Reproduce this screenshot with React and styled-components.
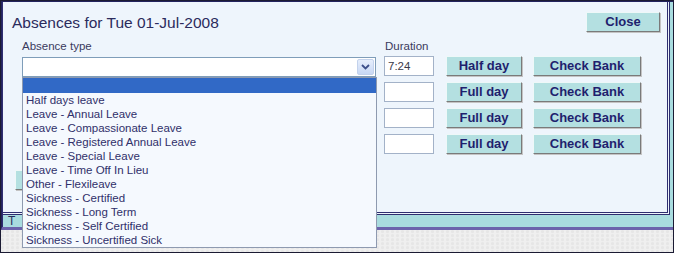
import React from 'react';
import styled, { createGlobalStyle } from 'styled-components';

const GlobalStyle = createGlobalStyle`
  body {
    margin: 0;
    background: #ffffff;
    font-family: "Liberation Sans", Arial, sans-serif;
  }
`;

const absenceTypes = [
  'Half days leave',
  'Leave - Annual Leave',
  'Leave - Compassionate Leave',
  'Leave - Registered Annual Leave',
  'Leave - Special Leave',
  'Leave - Time Off In Lieu',
  'Other - Flexileave',
  'Sickness - Certified',
  'Sickness - Long Term',
  'Sickness - Self Certified',
  'Sickness - Uncertified Sick',
];

const rows = [
  { duration: '7:24', kind: 'Half day' },
  { duration: '', kind: 'Full day' },
  { duration: '', kind: 'Full day' },
  { duration: '', kind: 'Full day' },
];

const App = () => {
  return (
    <>
      <GlobalStyle />
      <Page>
        <Window>
          <Panel>
            <Header>
              <Title>Absences for Tue 01-Jul-2008</Title>
              <Button $width={74}>Close</Button>
            </Header>
            <Form>
              <Label>Absence type</Label>
              <Label $indent={1}>Duration</Label>
              <span />
              <span />
              {rows.map((row, i) => (
                <React.Fragment key={i}>
                  {i === 0 ? (
                    <Combo>
                      <ComboArrow>
                        <svg width="9" height="6" viewBox="0 0 9 6">
                          <path d="M1 1 L4.5 4.5 L8 1" fill="none" stroke="#3d4f8a" strokeWidth="1.8" />
                        </svg>
                      </ComboArrow>
                    </Combo>
                  ) : (
                    <span />
                  )}
                  <DurationBox>{row.duration}</DurationBox>
                  <Button $width={76}>{row.kind}</Button>
                  <Button $width={108}>Check Bank</Button>
                </React.Fragment>
              ))}
            </Form>
            <Footer>
              {/* its caption is hidden behind the open list */}
              <Button $width={70} />
            </Footer>
          </Panel>
          <Strip>T</Strip>
        </Window>
        <Backdrop />
        <DropList>
          <Selected />
          {absenceTypes.map((t) => (
            <Item key={t}>{t}</Item>
          ))}
        </DropList>
      </Page>
    </>
  );
};

export default App;

const Page = styled.div`
  position: relative;
  box-sizing: border-box;
  width: 674px;
  height: 253px;
  overflow: hidden;
  border: 1px solid #1b1b33;
  display: flex;
  flex-direction: column;
  background: #eeeeee;
`;

const Window = styled.div`
  display: flex;
  flex-direction: column;
  border-top: 1px solid #23235e;
  border-left: 1px solid #23235e;
  border-bottom: 3px solid #6c64ac;
  padding-right: 3px;
  background: #a9dcdf;
`;

const Panel = styled.div`
  box-sizing: border-box;
  height: 213px;
  border-left: 1px solid #2e2e70;
  border-right: 3px double #2e2e70;
  border-bottom: 3px double #2e2e70;
  background: #eef5fc;
  padding: 10px 7px 0 9px;
  display: flex;
  flex-direction: column;
`;

const Header = styled.div`
  display: flex;
  justify-content: space-between;
  align-items: center;
  height: 20px;
`;

const Title = styled.div`
  font-size: 15.5px;
  line-height: 20px;
  color: #2b2b5c;
  margin-top: 1px;
`;

const Form = styled.div`
  display: grid;
  grid-template-columns: 362px 62px 87px 108px;
  grid-template-rows: 11px repeat(4, 20px);
  row-gap: 6px;
  margin: 7px 0 0 10px;
`;

const Label = styled.div`
  font-size: 11.5px;
  line-height: 14px;
  color: #3a3a5c;
  margin-left: ${(p) => (p.$indent ? `${p.$indent}px` : '0')};
`;

const Combo = styled.div`
  box-sizing: border-box;
  width: 354px;
  height: 20px;
  margin-top: 1px;
  border: 1px solid #7f9db9;
  background: #ffffff;
  display: flex;
  justify-content: flex-end;
  align-items: center;
  padding-right: 1px;
`;

const ComboArrow = styled.div`
  box-sizing: border-box;
  width: 17px;
  height: 16px;
  border: 1px solid #c3d2ec;
  border-radius: 2px;
  background: linear-gradient(#e6eefc, #c8d8f4);
  display: flex;
  align-items: center;
  justify-content: center;
`;

const DurationBox = styled.div`
  box-sizing: border-box;
  width: 50px;
  height: 20px;
  border: 1px solid #a3b2c8;
  background: #ffffff;
  font-size: 11.5px;
  line-height: 18px;
  padding-left: 3px;
  color: #3a3a4a;
`;

const Button = styled.div`
  box-sizing: border-box;
  width: ${(p) => p.$width}px;
  height: 20px;
  background: #b4e0e1;
  border: 1px solid;
  border-color: #eef8f8 #7a7a7a #7a7a7a #eef8f8;
  box-shadow: 1px 1px 0 #c4c4c4;
  font-size: 13px;
  font-weight: bold;
  line-height: 18px;
  text-align: center;
  color: #1f1f6e;
`;

const Footer = styled.div`
  display: flex;
  margin: 16px 0 0 3px;
`;

const Strip = styled.div`
  height: 12px;
  padding-left: 5px;
  border-left: 1px solid #2e2e70;
  font-size: 12px;
  line-height: 12px;
  color: #2b2b5c;
`;

const Backdrop = styled.div`
  flex: 1;
  background:
    radial-gradient(circle at 30% 40%, rgba(0, 0, 0, 0.04) 1px, transparent 2px) 0 0 / 5px 4px,
    #efefef;
`;

const DropList = styled.div`
  position: absolute;
  left: 21px;
  top: 76px;
  box-sizing: border-box;
  width: 355px;
  height: 171px;
  border: 1px solid #8e9ab0;
  background: #f5f9fe;
  display: flex;
  flex-direction: column;
`;

const Selected = styled.div`
  height: 15px;
  flex-shrink: 0;
  background: #3169c6;
`;

const Item = styled.div`
  height: 14px;
  flex-shrink: 0;
  padding-left: 3px;
  font-size: 11.5px;
  line-height: 14px;
  color: #30306a;
  white-space: nowrap;
`;
